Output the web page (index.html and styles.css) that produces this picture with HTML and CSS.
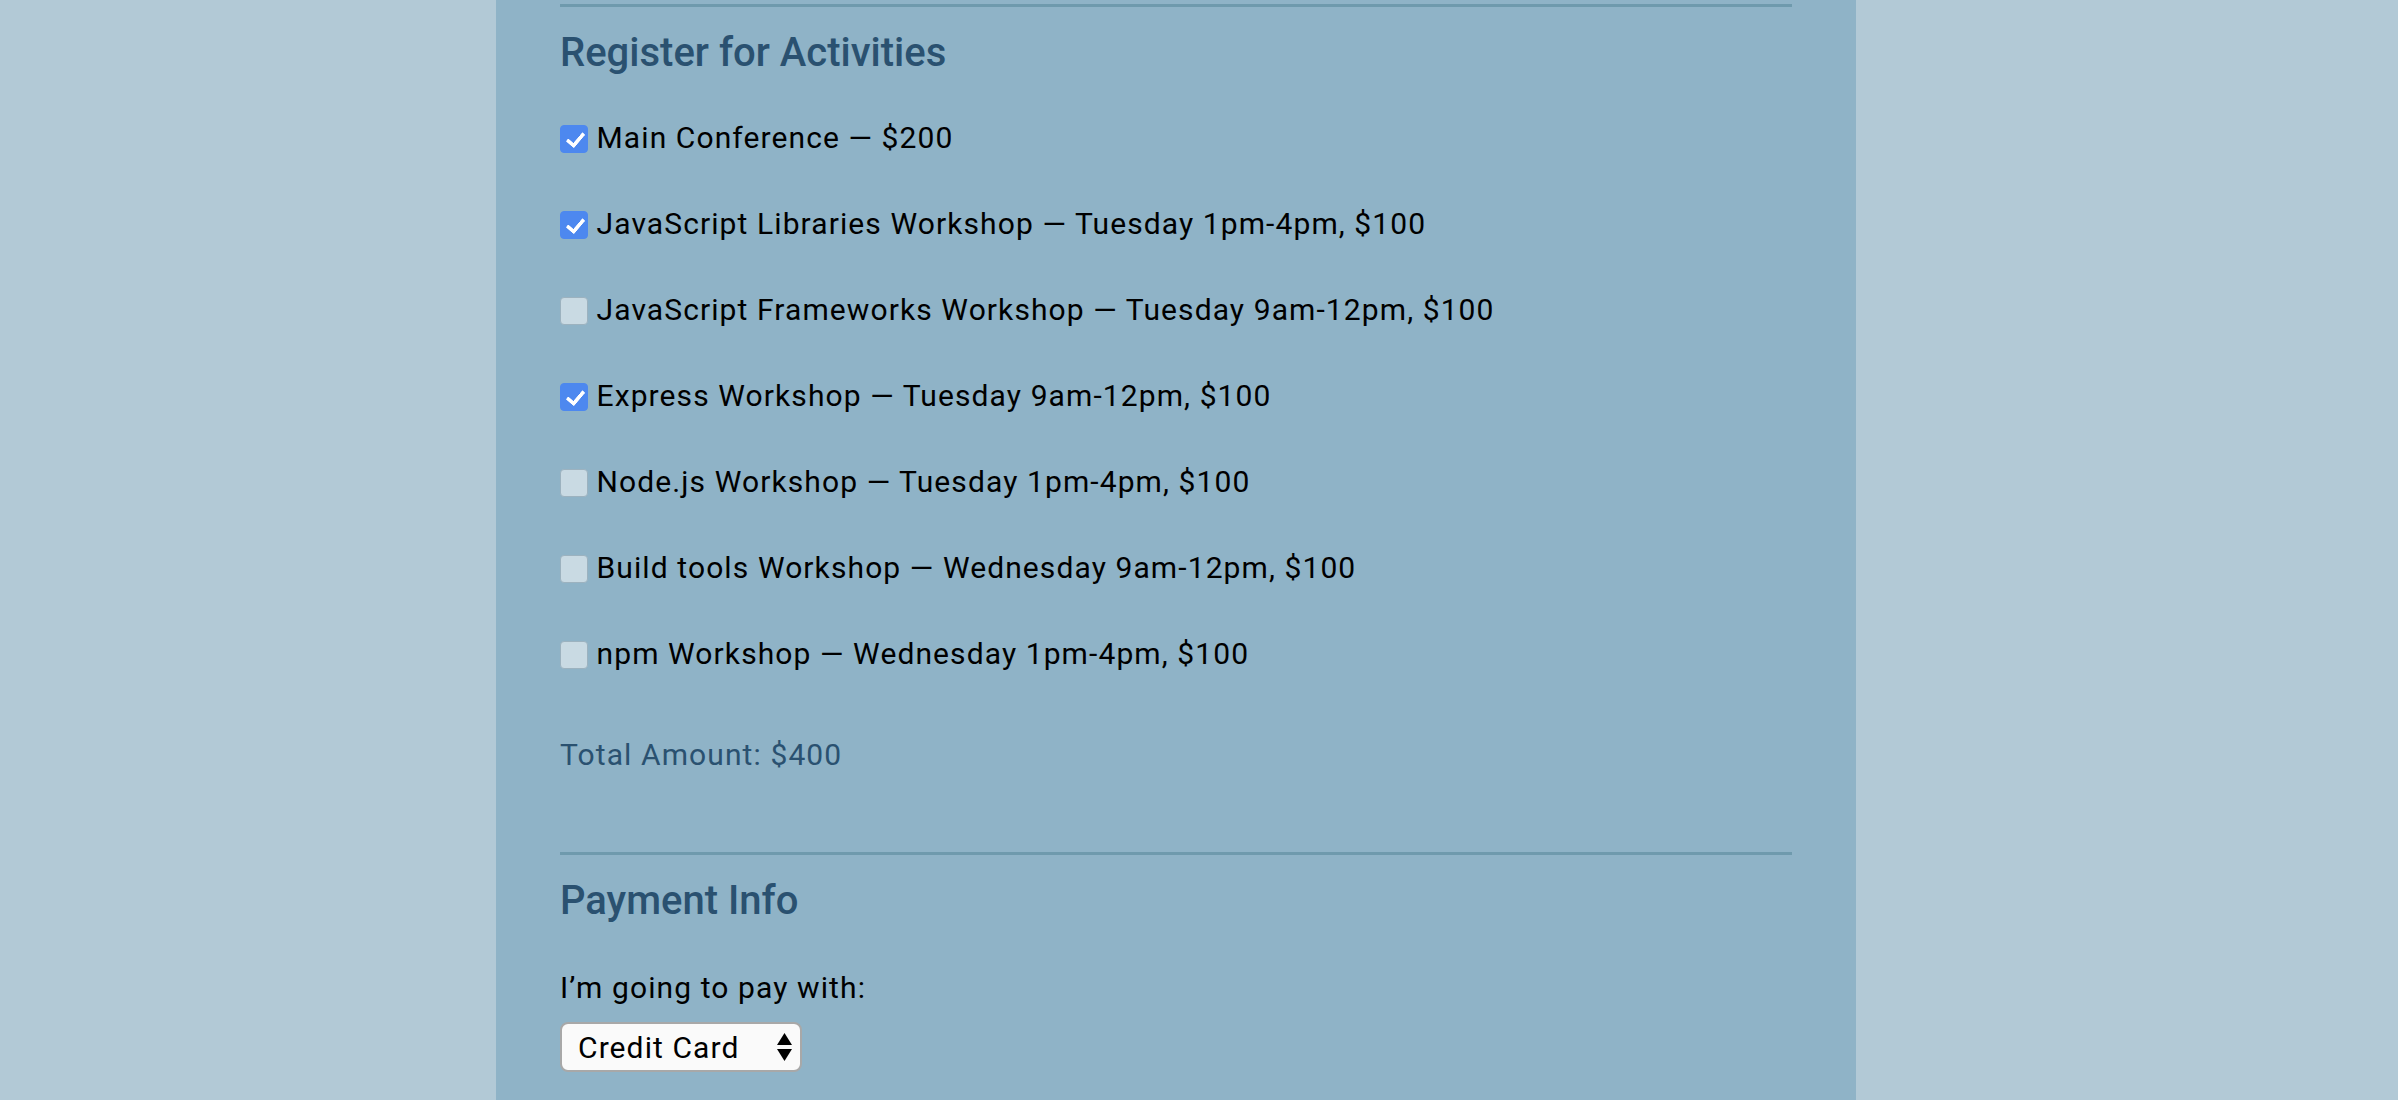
FILE: index.html
```html
<!DOCTYPE html>
<html lang="en">
<head>
<meta charset="utf-8">
<title>Register for Activities</title>
<link rel="stylesheet" href="styles.css">
</head>
<body>
<div class="container">
  <form class="form">
    <fieldset class="section activities">
      <legend class="section-title">Register for Activities</legend>
      <div class="activity-list">
        <label class="activity"><input type="checkbox" class="check" checked> Main Conference — $200</label>
        <label class="activity"><input type="checkbox" class="check" checked> JavaScript Libraries Workshop — Tuesday 1pm-4pm, $100</label>
        <label class="activity"><input type="checkbox" class="check"> JavaScript Frameworks Workshop — Tuesday 9am-12pm, $100</label>
        <label class="activity"><input type="checkbox" class="check" checked> Express Workshop — Tuesday 9am-12pm, $100</label>
        <label class="activity"><input type="checkbox" class="check"> Node.js Workshop — Tuesday 1pm-4pm, $100</label>
        <label class="activity"><input type="checkbox" class="check"> Build tools Workshop — Wednesday 9am-12pm, $100</label>
        <label class="activity"><input type="checkbox" class="check"> npm Workshop — Wednesday 1pm-4pm, $100</label>
      </div>
      <p class="total">Total Amount: $400</p>
    </fieldset>
    <fieldset class="section payment">
      <legend class="section-title">Payment Info</legend>
      <label class="pay-label" for="payment">I’m going to pay with:</label>
      <span class="select-wrap">
        <select id="payment" class="select">
          <option>Credit Card</option>
          <option>PayPal</option>
          <option>Bitcoin</option>
        </select>
        <svg class="select-arrows" width="15" height="28" viewBox="0 0 15 28" aria-hidden="true">
          <path d="M7.5 0 L15 12 L0 12 Z" fill="#000"/>
          <path d="M0 16 L15 16 L7.5 28 Z" fill="#000"/>
        </svg>
      </span>
    </fieldset>
  </form>
</div>
</body>
</html>
```
FILE: styles.css
```css
* { box-sizing: border-box; }

html, body {
  margin: 0;
  padding: 0;
}

body {
  background: #b2c9d6;
  font-family: Roboto, "Liberation Sans", sans-serif;
  color: #000;
  display: flex;
  justify-content: center;
  padding-right: 46px;
  min-height: 100vh;
}

.container {
  width: 1360px;
  background: #8fb3c7;
  padding: 4px 64px 0;
  min-height: 100vh;
}

.form {
  margin: 0;
}

.section {
  border: 0;
  border-top: 3px solid #6f9aad;
  margin: 0;
  padding: 0;
  min-width: 0;
  display: block;
}

.section-title {
  padding: 0;
  float: left;
  width: 100%;
  margin: 22px 0 0;
  font-size: 40px;
  line-height: 48px;
  font-weight: 500;
  color: #2a5170;
}

.activity-list {
  clear: both;
  padding-top: 43px;
  display: flex;
  flex-direction: column;
  gap: 50px;
}

.activity {
  display: block;
  font-size: 30px;
  line-height: 36px;
  letter-spacing: 1.1px;
}

.check {
  appearance: none;
  -webkit-appearance: none;
  position: relative;
  width: 28px;
  height: 28px;
  margin: 0 0 0 0;
  vertical-align: middle;
  border-radius: 4px;
  background: #c9dae3;
  border: 1px solid #9cb2bf;
  top: -1px;
}

.check:checked {
  background: #4d88ef;
  border-color: #4d88ef;
}

.check:checked::after {
  content: "";
  position: absolute;
  left: 8.5px;
  top: 3px;
  width: 7px;
  height: 14px;
  border-right: 4px solid #fff;
  border-bottom: 4px solid #fff;
  border-radius: 1.5px;
  transform: rotate(40deg);
}

.total {
  margin: 65px 0 0;
  padding-bottom: 79px;
  font-size: 30px;
  line-height: 36px;
  letter-spacing: 1.1px;
  color: #2a5170;
}

.pay-label {
  clear: both;
  display: block;
  padding-top: 45px;
  font-size: 30px;
  line-height: 36px;
  letter-spacing: 1.1px;
}

.select-wrap {
  position: relative;
  display: inline-block;
  margin-top: 16px;
}

.select {
  appearance: none;
  -webkit-appearance: none;
  width: 242px;
  height: 50px;
  padding: 0 0 0 16px;
  border: 2px solid #a8a8a8;
  border-radius: 8px;
  background: #fafafa;
  font-family: Roboto, "Liberation Sans", sans-serif;
  font-size: 30px;
  letter-spacing: 1.1px;
  color: #000;
  display: block;
}

.select-arrows {
  position: absolute;
  right: 10px;
  top: 11px;
  pointer-events: none;
}
```
